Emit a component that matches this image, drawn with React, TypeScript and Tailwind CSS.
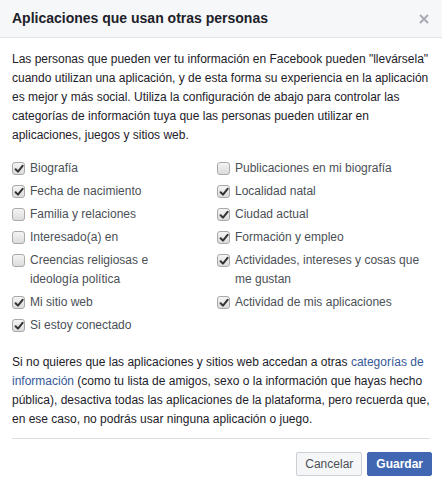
import React from "react";

function Box({ checked }: { checked: boolean }) {
  return (
    <span className="mt-[3px] flex h-[13px] w-[13px] shrink-0 items-center justify-center rounded-[3px] border border-[#a9a9a9] bg-gradient-to-b from-[#f4f4f4] to-[#dcdcdc]">
      {checked && (
        <svg width="10" height="10" viewBox="0 0 10 10">
          <path d="M1.6 5.2 L4 7.6 L8.6 1.8" fill="none" stroke="#333" strokeWidth="2" strokeLinecap="round" strokeLinejoin="round" />
        </svg>
      )}
    </span>
  );
}

function Item({ label, checked }: { label: string; checked: boolean }) {
  return (
    <label className="flex items-start gap-[5px] text-[12px] leading-[19px] text-[#4b4f56]">
      <Box checked={checked} />
      <span>{label}</span>
    </label>
  );
}

export default function App() {
  const left: [string, boolean][] = [
    ["Biografía", true],
    ["Fecha de nacimiento", true],
    ["Familia y relaciones", false],
    ["Interesado(a) en", false],
    ["Creencias religiosas e ideología política", false],
    ["Mi sitio web", true],
    ["Si estoy conectado", true],
  ];
  const right: [string, boolean][] = [
    ["Publicaciones en mi biografía", false],
    ["Localidad natal", true],
    ["Ciudad actual", true],
    ["Formación y empleo", true],
    ["Actividades, intereses y cosas que me gustan", true],
    ["Actividad de mis aplicaciones", true],
  ];
  return (
    <div className="w-[442px] h-[486px] bg-white font-['Liberation_Sans',Arial,sans-serif]">
      <div className="flex h-[38px] items-center justify-between border-b border-[#e5e5e5] bg-[#f6f7f9] pl-3 pr-3">
        <span className="text-[14px] font-bold text-[#1d2129]">Aplicaciones que usan otras personas</span>
        <svg width="10" height="10" viewBox="0 0 10 10" className="mr-[1px]">
          <path d="M1 1 L9 9 M9 1 L1 9" stroke="#a8acb3" strokeWidth="2" />
        </svg>
      </div>
      <div className="px-3 pt-3">
        <p className="text-[12px] leading-[19px] text-[#1d2129]">
          Las personas que pueden ver tu información en Facebook pueden "llevársela" cuando utilizan una aplicación, y de esta forma su experiencia en la aplicación es mejor y más social. Utiliza la configuración de abajo para controlar las categorías de información tuya que las personas pueden utilizar en aplicaciones, juegos y sitios web.
        </p>
        <div className="mt-[14px] grid grid-cols-[175px_1fr] gap-x-[30px]">
          <div className="flex flex-col gap-[4px]">
            {left.map(([l, c]) => (
              <Item key={l} label={l} checked={c} />
            ))}
          </div>
          <div className="flex flex-col gap-[4px]">
            {right.map(([l, c]) => (
              <Item key={l} label={l} checked={c} />
            ))}
          </div>
        </div>
        <p className="mt-[18px] text-[12px] leading-[19px] text-[#1d2129]">
          Si no quieres que las aplicaciones y sitios web accedan a otras{" "}
          <span className="text-[#365899]">categorías de información</span> (como tu lista de amigos, sexo o la información que hayas hecho pública), desactiva todas las aplicaciones de la plataforma, pero recuerda que, en ese caso, no podrás usar ninguna aplicación o juego.
        </p>
        <div className="mt-[9px] border-t border-[#dddfe2]" />
        <div className="flex justify-end gap-[5px] pt-[13px]">
          <button className="h-[24px] rounded-[2px] border border-[#ccd0d5] bg-[#f5f6f7] px-2 text-[12px] text-[#4b4f56]">Cancelar</button>
          <button className="mr-[-2px] h-[24px] rounded-[2px] border border-[#4267b2] bg-[#4267b2] px-2 text-[12px] font-bold text-white">Guardar</button>
        </div>
      </div>
    </div>
  );
}
